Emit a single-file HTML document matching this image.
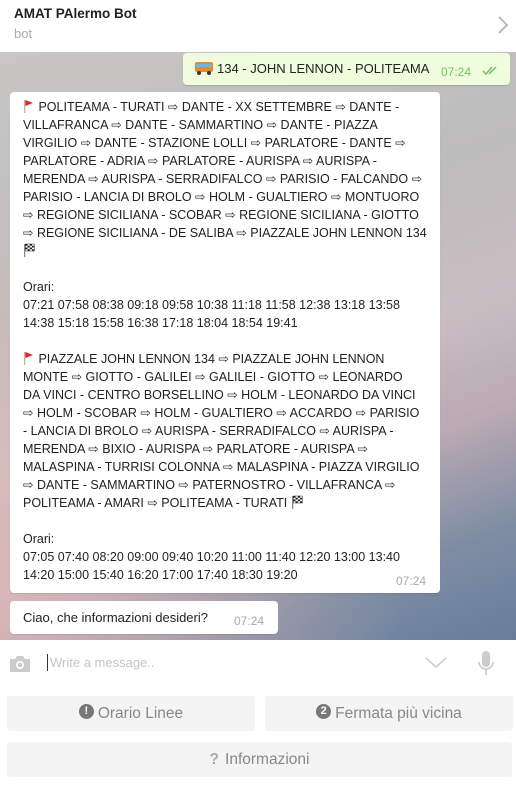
<!DOCTYPE html>
<html><head><meta charset="utf-8"><style>
*{margin:0;padding:0;box-sizing:border-box}
body{width:516px;height:785px;overflow:hidden;font-family:"Liberation Sans",sans-serif;background:#fff;position:relative}
.hdr{position:absolute;left:0;top:0;width:516px;height:52px;background:#fff}
.hdr .t{position:absolute;left:14px;top:6px;font-size:13.5px;font-weight:bold;color:#222}
.hdr .s{position:absolute;left:14px;top:26px;font-size:13px;color:#aaa}
.chat{position:absolute;left:0;top:52px;width:516px;height:588px;
background:linear-gradient(160deg,#c8c6c4 0%,#bdbcbc 35%,#c9bdc2 55%,#b9a9b3 70%,#7f8da3 85%,#667e9c 100%)}
.chat:before{content:"";position:absolute;inset:0;background:radial-gradient(ellipse at 0% 95%,rgba(225,185,185,.8),rgba(225,185,185,0) 55%)}
.out{position:absolute;left:183px;top:1px;width:327px;height:32px;background:#effdde;border-radius:4px;box-shadow:0 1px 1px rgba(0,0,0,.15);font-size:13px;color:#222}
.b{position:absolute;background:#fff;border-radius:4px;box-shadow:0 1px 1px rgba(0,0,0,.1);font-size:12.5px;color:#222}
.ln{height:18px;line-height:18px;white-space:nowrap}
.tm{position:absolute;font-size:12px;color:#a0acb6}
.flag{display:inline-block;width:12px;height:14px;vertical-align:-2px;position:relative}
.inp{position:absolute;left:0;top:640px;width:516px;height:50px;background:#fff}
.btn{position:absolute;background:#f4f4f4;border-radius:3px;color:#888;font-size:15.5px;text-align:center;line-height:35px;height:35px}
.ic{display:inline-block;width:15px;height:15px;border-radius:50%;background:#777;color:#fff;font-size:11px;line-height:15px;font-weight:bold;vertical-align:middle;margin-right:4px;position:relative;top:-2px}
</style></head><body>
<div class="hdr"><div class="t">AMAT PAlermo Bot</div><div class="s">bot</div>
<svg style="position:absolute;left:497px;top:16px" width="12" height="18"><path d="M2 1 L10 9 L2 17" stroke="#bbb" stroke-width="2" fill="none"/></svg></div>
<div class="chat">
<div class="out">
<svg style="position:absolute;left:12px;top:8px" width="18" height="14"><rect x="0" y="1" width="18" height="10" rx="2" fill="#e98a2a"/><rect x="1.5" y="3" width="15" height="3" fill="#7fb4d8"/><circle cx="4" cy="12" r="2" fill="#333"/><circle cx="14" cy="12" r="2" fill="#333"/></svg>
<span style="position:absolute;left:34px;top:8px">134 - JOHN LENNON - POLITEAMA</span>
<span style="position:absolute;left:258px;top:12px;font-size:12px;color:#6cc264">07:24</span>
<svg style="position:absolute;left:299px;top:13px" width="18" height="10"><path d="M1 5 L4 8 L10 1 M7 8 L14 1" stroke="#6cc264" stroke-width="1.5" fill="none"/></svg>
</div>
<div class="b" style="left:10px;top:40px;width:430px;height:501px;padding:6px 0 0 13px">
<div class="ln"><svg class="flag" viewBox="0 0 12 14"><rect x="1" y="1" width="1.3" height="13" fill="#c9b58a"/><path d="M2.3 1 L10 4 L2.3 7Z" fill="#e0262b"/></svg> POLITEAMA - TURATI ⇨ DANTE - XX SETTEMBRE ⇨ DANTE -</div>
<div class="ln">VILLAFRANCA ⇨ DANTE - SAMMARTINO ⇨ DANTE - PIAZZA</div>
<div class="ln">VIRGILIO ⇨ DANTE - STAZIONE LOLLI ⇨ PARLATORE - DANTE ⇨</div>
<div class="ln">PARLATORE - ADRIA ⇨ PARLATORE - AURISPA ⇨ AURISPA -</div>
<div class="ln">MERENDA ⇨ AURISPA - SERRADIFALCO ⇨ PARISIO - FALCANDO ⇨</div>
<div class="ln">PARISIO - LANCIA DI BROLO ⇨ HOLM - GUALTIERO ⇨ MONTUORO</div>
<div class="ln">⇨ REGIONE SICILIANA - SCOBAR ⇨ REGIONE SICILIANA - GIOTTO</div>
<div class="ln">⇨ REGIONE SICILIANA - DE SALIBA ⇨ PIAZZALE JOHN LENNON 134</div>
<div class="ln"><svg class="flag" viewBox="0 0 12 14"><rect x="1" y="1" width="1.3" height="13" fill="#888"/><path d="M2.3 1h9v7h-9z" fill="#fff" stroke="#222" stroke-width=".5"/><path d="M2.3 1h2.25v1.75h-2.25zM6.8 1h2.25v1.75h-2.25zM4.55 2.75h2.25v1.75h-2.25zM9.05 2.75h2.25v1.75h-2.25zM2.3 4.5h2.25v1.75h-2.25zM6.8 4.5h2.25v1.75h-2.25zM4.55 6.25h2.25v1.75h-2.25zM9.05 6.25h2.25v1.75h-2.25z" fill="#222"/></svg></div>
<div class="ln"></div>
<div class="ln">Orari:</div>
<div class="ln">07:21 07:58 08:38 09:18 09:58 10:38 11:18 11:58 12:38 13:18 13:58</div>
<div class="ln">14:38 15:18 15:58 16:38 17:18 18:04 18:54 19:41</div>
<div class="ln"></div>
<div class="ln"><svg class="flag" viewBox="0 0 12 14"><rect x="1" y="1" width="1.3" height="13" fill="#c9b58a"/><path d="M2.3 1 L10 4 L2.3 7Z" fill="#e0262b"/></svg> PIAZZALE JOHN LENNON 134 ⇨ PIAZZALE JOHN LENNON</div>
<div class="ln">MONTE ⇨ GIOTTO - GALILEI ⇨ GALILEI - GIOTTO ⇨ LEONARDO</div>
<div class="ln">DA VINCI - CENTRO BORSELLINO ⇨ HOLM - LEONARDO DA VINCI</div>
<div class="ln">⇨ HOLM - SCOBAR ⇨ HOLM - GUALTIERO ⇨ ACCARDO ⇨ PARISIO</div>
<div class="ln">- LANCIA DI BROLO ⇨ AURISPA - SERRADIFALCO ⇨ AURISPA -</div>
<div class="ln">MERENDA ⇨ BIXIO - AURISPA ⇨ PARLATORE - AURISPA ⇨</div>
<div class="ln">MALASPINA - TURRISI COLONNA ⇨ MALASPINA - PIAZZA VIRGILIO</div>
<div class="ln">⇨ DANTE - SAMMARTINO ⇨ PATERNOSTRO - VILLAFRANCA ⇨</div>
<div class="ln">POLITEAMA - AMARI ⇨ POLITEAMA - TURATI <svg class="flag" viewBox="0 0 12 14"><rect x="1" y="1" width="1.3" height="13" fill="#888"/><path d="M2.3 1h9v7h-9z" fill="#fff" stroke="#222" stroke-width=".5"/><path d="M2.3 1h2.25v1.75h-2.25zM6.8 1h2.25v1.75h-2.25zM4.55 2.75h2.25v1.75h-2.25zM9.05 2.75h2.25v1.75h-2.25zM2.3 4.5h2.25v1.75h-2.25zM6.8 4.5h2.25v1.75h-2.25zM4.55 6.25h2.25v1.75h-2.25zM9.05 6.25h2.25v1.75h-2.25z" fill="#222"/></svg></div>
<div class="ln"></div>
<div class="ln">Orari:</div>
<div class="ln">07:05 07:40 08:20 09:00 09:40 10:20 11:00 11:40 12:20 13:00 13:40</div>
<div class="ln">14:20 15:00 15:40 16:20 17:00 17:40 18:30 19:20</div>
<span class="tm" style="left:386px;top:482px">07:24</span>
</div>
<div class="b" style="left:10px;top:549px;width:268px;height:33px">
<span style="position:absolute;left:13px;top:9px;font-size:13px">Ciao, che informazioni desideri?</span>
<span class="tm" style="left:224px;top:13px">07:24</span></div>
</div>
<div class="inp">
<svg style="position:absolute;left:8px;top:15px" width="24" height="18"><path d="M2 4h5l2-3h6l2 3h5v13H2z" fill="#ccc"/><circle cx="12" cy="10" r="4" fill="#fff"/><circle cx="12" cy="10" r="2.3" fill="#ccc"/></svg>
<div style="position:absolute;left:47px;top:14px;width:1px;height:17px;background:#333"></div>
<span style="position:absolute;left:50px;top:15px;font-size:13px;color:#c4c4c4">Write a message..</span>
<svg style="position:absolute;left:425px;top:17px" width="22" height="12"><path d="M1 1L11 10L21 1" stroke="#ccc" stroke-width="1.6" fill="none"/></svg>
<svg style="position:absolute;left:477px;top:11px" width="18" height="25"><rect x="5" y="0" width="8" height="16" rx="4" fill="#ccc"/><path d="M2 11a7 7 0 0 0 14 0" stroke="#ccc" stroke-width="1.6" fill="none"/><rect x="8.2" y="18" width="1.6" height="6" fill="#ccc"/></svg>
</div>
<div class="btn" style="left:7px;top:696px;width:248px"><span class="ic">!</span>Orario Linee</div>
<div class="btn" style="left:265px;top:696px;width:248px"><span class="ic">2</span>Fermata più vicina</div>
<div class="btn" style="left:7px;top:742px;width:505px"><span style="color:#aaa;font-weight:bold;margin-right:6px">?</span>Informazioni</div>
</body></html>
